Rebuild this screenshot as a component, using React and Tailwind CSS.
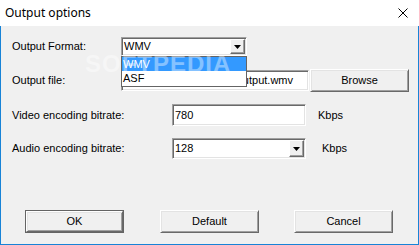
import React from "react";

const sunken =
  "border border-t-[#a0a0a0] border-l-[#a0a0a0] border-b-white border-r-white shadow-[inset_1px_1px_0_#696969,inset_-1px_-1px_0_#e3e3e3]";

function DropBtn() {
  return (
    <div className="w-[15px] self-stretch my-[1px] mr-[1px] bg-[#f0f0f0] border border-t-white border-l-white border-b-[#696969] border-r-[#696969] shadow-[inset_-1px_-1px_0_#a0a0a0] flex items-center justify-center">
      <svg width="7" height="4" viewBox="0 0 7 4">
        <path d="M0 0h7L3.5 4z" fill="#000" />
      </svg>
    </div>
  );
}

function Btn({ children, def }) {
  const inner = (
    <div className="w-full h-full flex items-center justify-center bg-[#f0f0f0] border border-t-white border-l-white border-b-[#696969] border-r-[#696969] shadow-[inset_1px_1px_0_#e3e3e3,inset_-1px_-1px_0_#a0a0a0] text-[11px] text-black">
      {children}
    </div>
  );
  if (def)
    return (
      <div className="w-[99px] h-[23px] border border-[#646464]">{inner}</div>
    );
  return <div className="w-[99px] h-[23px]">{inner}</div>;
}

export default function App() {
  return (
    <div className="w-[419px] h-[245px] flex flex-col bg-white font-['Liberation_Sans',Arial,sans-serif] text-black">
      <div className="h-[26px] flex items-center justify-between pl-[5px] pr-[11px] bg-white">
        <span className="text-[12px] font-['Noto_Sans',sans-serif] leading-none">Output options</span>
        <svg width="10" height="10" viewBox="0 0 10 10">
          <path d="M0.5 0.5L9.5 9.5M9.5 0.5L0.5 9.5" stroke="#000" strokeWidth="1" />
        </svg>
      </div>
      <div className="flex-1 relative bg-[#f0f0f0] border-x border-b border-[#1883d7] flex flex-col pl-[11px] text-[11px]">
        {/* Row 1 */}
        <div className="mt-[11px] h-[19px] flex items-center">
          <span className="w-[109px]">Output Format:</span>
          <div className={`w-[126px] h-[19px] bg-white flex items-center ${sunken}`}>
            <span className="flex-1 pl-[2px]">WMV</span>
            <DropBtn />
          </div>
        </div>
        {/* Row 2 */}
        <div className="mt-[13px] h-[23px] flex items-center">
          <span className="w-[109px]">Output file:</span>
          <div className={`w-[188px] h-[21px] bg-white flex items-center justify-end overflow-hidden pr-[15px] whitespace-nowrap ${sunken}`}>
            <span>C:\Users\Default\Videos\output.wmv</span>
          </div>
          <div className="ml-[1px]">
            <Btn>Browse</Btn>
          </div>
        </div>
        {/* Row 3 */}
        <div className="mt-[12px] h-[22px] flex items-center">
          <span className="w-[160px]">Video encoding bitrate:</span>
          <div className={`w-[134px] h-[22px] bg-white flex items-center pl-[2px] ${sunken}`}>
            <span>780</span>
          </div>
          <span className="ml-[12px]">Kbps</span>
        </div>
        {/* Row 4 */}
        <div className="mt-[12px] h-[21px] flex items-center">
          <span className="w-[160px]">Audio encoding bitrate:</span>
          <div className={`w-[134px] h-[21px] bg-white flex items-center ${sunken}`}>
            <span className="flex-1 pl-[2px]">128</span>
            <DropBtn />
          </div>
          <span className="ml-[16px]">Kbps</span>
        </div>
        {/* Buttons */}
        <div className="mt-[51px] flex items-center pl-[13px]">
          <Btn def>OK</Btn>
          <div className="ml-[36px]">
            <Btn>Default</Btn>
          </div>
          <div className="ml-[35px]">
            <Btn>Cancel</Btn>
          </div>
        </div>

        {/* Dropdown list overlay */}
        <div className="absolute left-[120px] top-[30px] w-[126px] h-[31px] bg-white border border-[#646464] flex flex-col">
          <div className="h-[14px] bg-[#3399ff] text-white flex items-center pl-[1px]">WMV</div>
          <div className="h-[14px] flex items-center pl-[1px]">ASF</div>
        </div>
        {/* Watermark */}
        <div className="absolute left-[84px] top-[26px] pointer-events-none text-[24px] font-bold font-['Liberation_Sans',sans-serif] text-white opacity-40 tracking-[1px] leading-none">
          SOFTPEDIA
        </div>
      </div>
    </div>
  );
}
